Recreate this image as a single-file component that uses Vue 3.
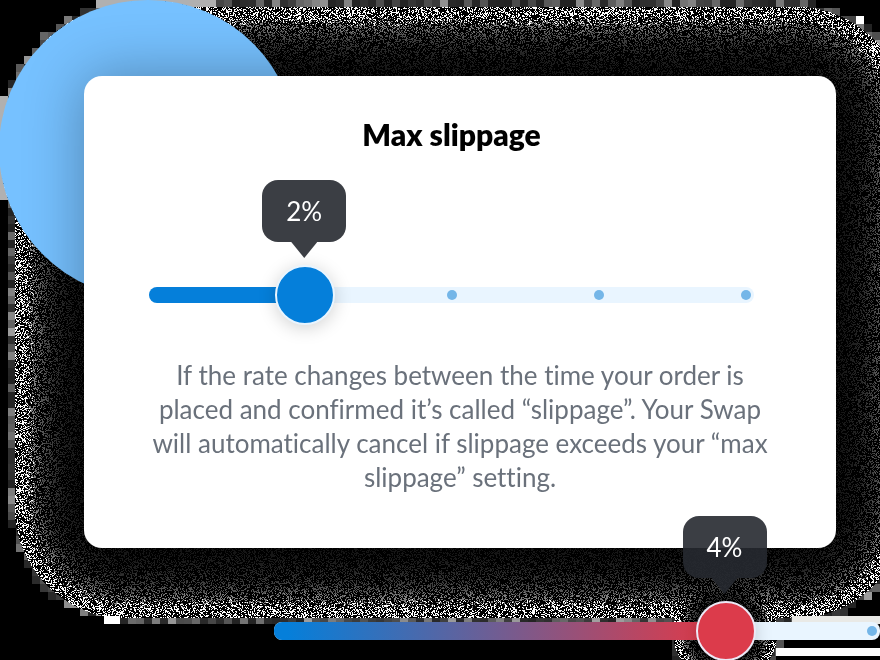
<script setup>
import { ref, onMounted, onBeforeUnmount } from 'vue'

const swap = ref(2)
const limit = ref(4)
const steps = [1, 2, 3, 4, 5]

const stage = ref(null)
const card = ref(null)
const grain = ref(null)
let observer

const share = (value) => (value - 1) / 4
const place = (value) => `calc(8px + (100% - 16px) * ${share(value)})`

// Small seeded generator, so that the grain is the same on every paint.
function generator(seed) {
  let s = seed
  return () => {
    s = (s + 0x6d2b79f5) | 0
    let t = Math.imul(s ^ (s >>> 15), 1 | s)
    t = (t + Math.imul(t ^ (t >>> 7), 61 | t)) ^ t
    return ((t ^ (t >>> 14)) >>> 0) / 4294967296
  }
}

// Paints the grainy halo that surrounds the card and the red handle.
function paint() {
  const canvas = grain.value
  const box = stage.value.getBoundingClientRect()
  const c = card.value.getBoundingClientRect()
  const w = Math.round(box.width)
  const h = Math.round(box.height)
  canvas.width = w
  canvas.height = h
  const ctx = canvas.getContext('2d')
  const image = ctx.createImageData(w, h)
  const random = generator(11)
  const spread = 70
  const radius = 112
  const left = c.left - box.left - spread
  const top = c.top - box.top - spread
  const right = left + c.width + spread * 2
  const bottom = top + c.height + spread * 2
  const railLeft = c.left - box.left + 191
  const knobX = railLeft + 8 + (w - railLeft - 16) * share(limit.value)
  const knobY = c.bottom - box.top + 84

  const cardDepth = (x, y) => {
    const dx = Math.max(left + radius - x, x - right + radius)
    const dy = Math.max(top + radius - y, y - bottom + radius)
    if (dx > 0 && dy > 0) return radius - Math.hypot(dx, dy)
    return radius - Math.max(dx, dy)
  }
  const knobDepth = (x, y) => 52 - Math.hypot(x - knobX, y - knobY)
  const discDepth = (x, y) => 149 - Math.hypot(x - 148, y - 149)
  const inside = (x, y) => cardDepth(x, y) > 0 || knobDepth(x, y) > 0 || discDepth(x, y) > 0

  const put = (x, y, v) => {
    const i = (y * w + x) * 4
    image.data[i] = image.data[i + 1] = image.data[i + 2] = v
    image.data[i + 3] = 255
  }

  for (let by = 0; by < h; by += 8) {
    for (let bx = 0; bx < w; bx += 8) {
      const edge = [[0, 0], [7, 0], [0, 7], [7, 7], [4, 4]].some(([x, y]) => inside(bx + x, by + y))
      const nearDisc = discDepth(bx + 4, by + 4) > -10 && (bx < 8 || by < 8)
      const tone = !edge ? 0 : nearDisc ? 176 : 35 + Math.floor(random() ** 2 * 130)
      for (let y = by; y < Math.min(by + 8, h); y++) {
        for (let x = bx; x < Math.min(bx + 8, w); x++) {
          if (!inside(x, y)) {
            put(x, y, tone)
            continue
          }
          const a = Math.max(0, cardDepth(x, y))
          const k = Math.max(0, knobDepth(x, y))
          const level = Math.floor(0.6 + (a / 16) ** 1.6 + (k / 8) ** 1.7 + random())
          put(x, y, random() < 0.37 ? 255 / Math.max(1, level) : 0)
        }
      }
    }
  }
  ctx.putImageData(image, 0, 0)

  ctx.fillStyle = '#fff'
  ctx.fillRect(right - 50, top + 10, 8, 8)
  ctx.fillRect(left + 90, bottom - 2, 16, 8)
  ctx.fillRect(knobX + 51, knobY + 16, w, 8)
  ctx.fillStyle = '#e9e9e6'
  ctx.fillRect(knobX + 67, knobY - 16, w, 8)
}

onMounted(() => {
  paint()
  observer = new ResizeObserver(paint)
  observer.observe(stage.value)
})
onBeforeUnmount(() => observer.disconnect())
</script>

<template>
  <main ref="stage" class="stage">
    <canvas ref="grain" class="grain" aria-hidden="true"></canvas>
    <div class="disc"></div>

    <section ref="card" class="card">
      <div class="control">
        <h1 class="title"><label for="swap-slippage">Max slippage</label></h1>
        <div class="slider">
          <div class="rail"></div>
          <div class="ticks">
            <i v-for="s in steps" :key="s" class="tick" :class="{ covered: s <= swap }"></i>
          </div>
          <div class="fill" :style="{ width: place(swap) }"></div>
          <input id="swap-slippage" v-model.number="swap" class="range" type="range" min="1" max="5" />
          <output class="bubble" for="swap-slippage" :style="{ left: place(swap) }">{{ swap }}%</output>
        </div>
      </div>
      <p class="note">
        If the rate changes between the time your order is<br />
        placed and confirmed it’s called “slippage”. Your Swap<br />
        will automatically cancel if slippage exceeds your “max<br />
        slippage” setting.
      </p>
    </section>

    <div class="slider slider-limit">
      <div class="rail"></div>
      <div class="ticks">
        <i v-for="s in steps" :key="s" class="tick" :class="{ covered: s <= limit }"></i>
      </div>
      <div class="fill" :style="{ width: place(limit) }"></div>
      <input
        id="limit-slippage"
        v-model.number="limit"
        class="range"
        type="range"
        min="1"
        max="5"
        aria-label="Max slippage"
        @input="paint"
      />
      <output class="bubble" for="limit-slippage" :style="{ left: place(limit) }">{{ limit }}%</output>
    </div>
  </main>
</template>

<style>
body {
  background: #000;
}
</style>

<style scoped>
.stage {
  position: relative;
  box-sizing: border-box;
  min-height: 100vh;
  padding-top: 76px;
  overflow: hidden;
  background: #000;
  font-family: Lato, "Open Sans", sans-serif;
  font-variant-ligatures: none;
}

.grain {
  position: absolute;
  top: 0;
  left: 0;
}

.disc {
  position: absolute;
  top: 0;
  left: -1px;
  width: 298px;
  height: 298px;
  border-radius: 50%;
  background: #76c1ff;
}

.card {
  position: relative;
  box-sizing: border-box;
  margin: 0 44px 0 84px;
  padding: 40px 60px 54px;
  border-radius: 18px;
  background: #fff;
  box-shadow: 0 0 60px rgba(0, 0, 0, 0.32);
}

.control {
  padding: 0 22px 0 5px;
}

.title {
  margin: 0 0 28px;
  color: #000;
  font-size: 30px;
  font-weight: 800;
  line-height: 36px;
  text-align: center;
}

.slider {
  position: relative;
  display: grid;
  align-items: center;
  padding-top: 85px;
}

.slider > .rail,
.slider > .ticks,
.slider > .fill,
.slider > .range {
  grid-area: 1 / 1;
}

.rail,
.fill {
  height: 16px;
  border-radius: 8px;
}

.rail {
  background: #e9f5ff;
}

.fill {
  border-radius: 8px 0 0 8px;
  background: #057fda;
}

.ticks {
  display: flex;
  justify-content: space-between;
  padding: 0 3px;
}

.tick {
  width: 10px;
  height: 10px;
  border-radius: 50%;
  background: #74b6e8;
}

.covered {
  visibility: hidden;
}

.range {
  position: relative;
  width: calc(100% + 44px);
  height: 60px;
  margin: 0 -23px 0 -21px;
  appearance: none;
  background: transparent;
  cursor: pointer;
}

.range::-webkit-slider-thumb {
  appearance: none;
  box-sizing: border-box;
  width: 60px;
  height: 60px;
  border: 2px solid #e9f5ff;
  border-radius: 50%;
  background: #057fda;
  box-shadow: 0 3px 18px rgba(0, 0, 0, 0.18);
}

.bubble {
  position: absolute;
  top: 0;
  width: 84px;
  border-radius: 16px;
  background: rgba(38, 41, 48, 0.9);
  color: #fff;
  font-size: 26px;
  line-height: 62px;
  text-align: center;
  transform: translateX(-50%);
}

.bubble::after {
  content: "";
  position: absolute;
  top: 100%;
  left: 29px;
  width: 26px;
  height: 16px;
  background: inherit;
  clip-path: polygon(0 0, 100% 0, 50% 100%);
}

.note {
  margin: 33px 0 0;
  color: #6a717b;
  font-size: 26px;
  line-height: 34px;
  text-align: center;
  white-space: nowrap;
}

.slider-limit {
  margin: -32px 0 0 274px;
}

.slider-limit .rail,
.slider-limit .fill {
  height: 18px;
}

.slider-limit .fill {
  background: linear-gradient(90deg, #057fda 3%, #dc3b4b 96%);
}

.slider-limit .range::-webkit-slider-thumb {
  border-color: #ece8f6;
  background: #dc3b4b;
}
</style>
